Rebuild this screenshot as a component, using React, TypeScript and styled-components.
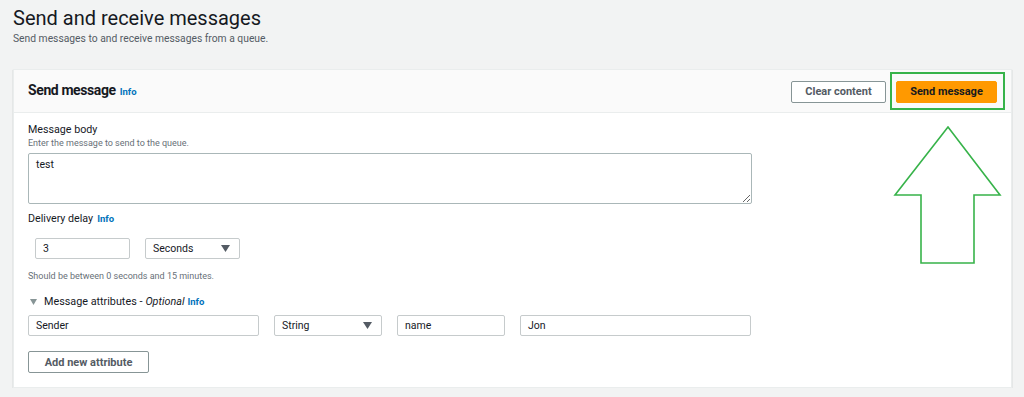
import styled, { createGlobalStyle } from "styled-components";

const GlobalStyle = createGlobalStyle`
    body{
        margin:0;
        background:#f2f3f3;
        font-family: Roboto, "Liberation Sans", Arial, sans-serif;
        color:#16191f;
    }
    *{ box-sizing:border-box; }
`;

const Page = styled.div`
    padding: 6px 12px 0 13px;
`;

const Title = styled.h1`
    margin:0;
    font-size:20px;
    font-weight:400;
    line-height:24px;
    color:#16191f;
`;

const Subtitle = styled.p`
    margin:2px 0 0;
    font-size:10.3px;
    line-height:13px;
    color:#545b64;
`;

const Card = styled.section`
    position:relative;
    margin-top:24px;
    width:999px;
    background:#fff;
    border:1px solid #eaeded;
    box-shadow: 0 1px 1px 0 rgba(0,28,36,0.3);
`;

const CardHeader = styled.div`
    height:43px;
    display:flex;
    align-items:center;
    justify-content:space-between;
    padding: 0 14px 0 14px;
    background:#fafafa;
    border-bottom:1px solid #eaeded;
`;

const CardTitle = styled.h2`
    margin:0;
    font-size:14px;
    font-weight:700;
    letter-spacing:-0.4px;
    line-height:20px;
    display:flex;
    align-items:baseline;
    gap:4px;
`;

const Info = styled.span`
    font-size:9.5px;
    font-weight:700;
    letter-spacing:0;
    color:#0073bb;
    font-style:normal;
`;

const Actions = styled.div`
    display:flex;
    gap:10px;
    margin-top:1px;
`;

const Button = styled.button<{ $primary?: boolean; $width: number }>`
    width:${p => p.$width}px;
    height:22px;
    padding:0;
    font-family:inherit;
    font-size:11px;
    font-weight:700;
    color:${p => (p.$primary ? "#16191f" : "#545b64")};
    background:${p => (p.$primary ? "#ff9900" : "#fff")};
    border:1px solid ${p => (p.$primary ? "#ff9900" : "#879596")};
    border-radius:2px;
`;

const CardBody = styled.div`
    padding: 10px 14px 14px 14px;
`;

const Label = styled.div<{ $top?: number }>`
    font-size:10.7px;
    line-height:14px;
    margin-top:${p => p.$top ?? 0}px;
    display:flex;
    align-items:baseline;
    gap:4px;
`;

const Hint = styled.div<{ $top?: number }>`
    font-size:9px;
    line-height:12px;
    color:#687078;
    margin-top:${p => p.$top ?? 0}px;
`;

const TextArea = styled.textarea`
    display:block;
    margin-top:4px;
    width:724px;
    height:51px;
    padding:4px 7px;
    font-family:inherit;
    font-size:10.5px;
    color:#16191f;
    border:1px solid #aab7b8;
    border-radius:2px;
    resize:vertical;
`;

const Row = styled.div<{ $top: number; $indent?: number }>`
    display:flex;
    gap:15px;
    margin-top:${p => p.$top}px;
    margin-left:${p => p.$indent ?? 0}px;
`;

const Field = styled.div<{ $width: number }>`
    width:${p => p.$width}px;
    height:21px;
    display:flex;
    align-items:center;
    justify-content:space-between;
    padding:0 9px 0 7px;
    font-size:10.5px;
    color:#16191f;
    background:#fff;
    border:1px solid #c6cbcc;
    border-radius:2px;
`;

const Caret = () => (
    <svg width="9" height="7" viewBox="0 0 9 7">
        <polygon points="0,0 9,0 4.5,7" fill="#545b64" />
    </svg>
);

const Expander = styled.div`
    margin-top:13px;
    display:flex;
    align-items:center;
    font-size:10.8px;
    line-height:14px;
    padding-left:2px;
    svg{ margin-right:7px; }
    em{ font-style:italic; margin:0 3px 0 3px; }
`;

const Highlight = styled.div`
    position:absolute;
    left:876px;
    top:2px;
    width:115px;
    height:38px;
    border:2px solid #37b34a;
    pointer-events:none;
`;

const Arrow = styled.svg`
    position:absolute;
    left:879px;
    top:56px;
`;

function App() {
    return (
        <Page>
            <GlobalStyle />
            <Title>Send and receive messages</Title>
            <Subtitle>Send messages to and receive messages from a queue.</Subtitle>
            <Card>
                <CardHeader>
                    <CardTitle>
                        Send message <Info>Info</Info>
                    </CardTitle>
                    <Actions>
                        <Button $width={95}>Clear content</Button>
                        <Button $primary $width={101}>Send message</Button>
                    </Actions>
                </CardHeader>
                <CardBody>
                    <Label>Message body</Label>
                    <Hint>Enter the message to send to the queue.</Hint>
                    <TextArea defaultValue="test" />
                    <Label $top={8}>
                        Delivery delay <Info>Info</Info>
                    </Label>
                    <Row $top={12} $indent={7}>
                        <Field $width={95}>3</Field>
                        <Field $width={95}>
                            Seconds <Caret />
                        </Field>
                    </Row>
                    <Hint $top={11}>Should be between 0 seconds and 15 minutes.</Hint>
                    <Expander>
                        <svg width="7" height="6" viewBox="0 0 7 6">
                            <polygon points="0,0 7,0 3.5,6" fill="#879596" />
                        </svg>
                        Message attributes - <em>Optional</em> <Info>Info</Info>
                    </Expander>
                    <Row $top={6}>
                        <Field $width={231}>Sender</Field>
                        <Field $width={108}>
                            String <Caret />
                        </Field>
                        <Field $width={108}>name</Field>
                        <Field $width={231}>Jon</Field>
                    </Row>
                    <Row $top={15}>
                        <Button $width={121}>Add new attribute</Button>
                    </Row>
                </CardBody>
                <Highlight />
                <Arrow width="110" height="140" viewBox="0 0 110 140">
                    <polygon
                        points="55,1 107,69 81,69 81,137 28,137 28,69 2,69"
                        fill="none"
                        stroke="#37b34a"
                        strokeWidth="1.6"
                    />
                </Arrow>
            </Card>
        </Page>
    );
}

export default App;
